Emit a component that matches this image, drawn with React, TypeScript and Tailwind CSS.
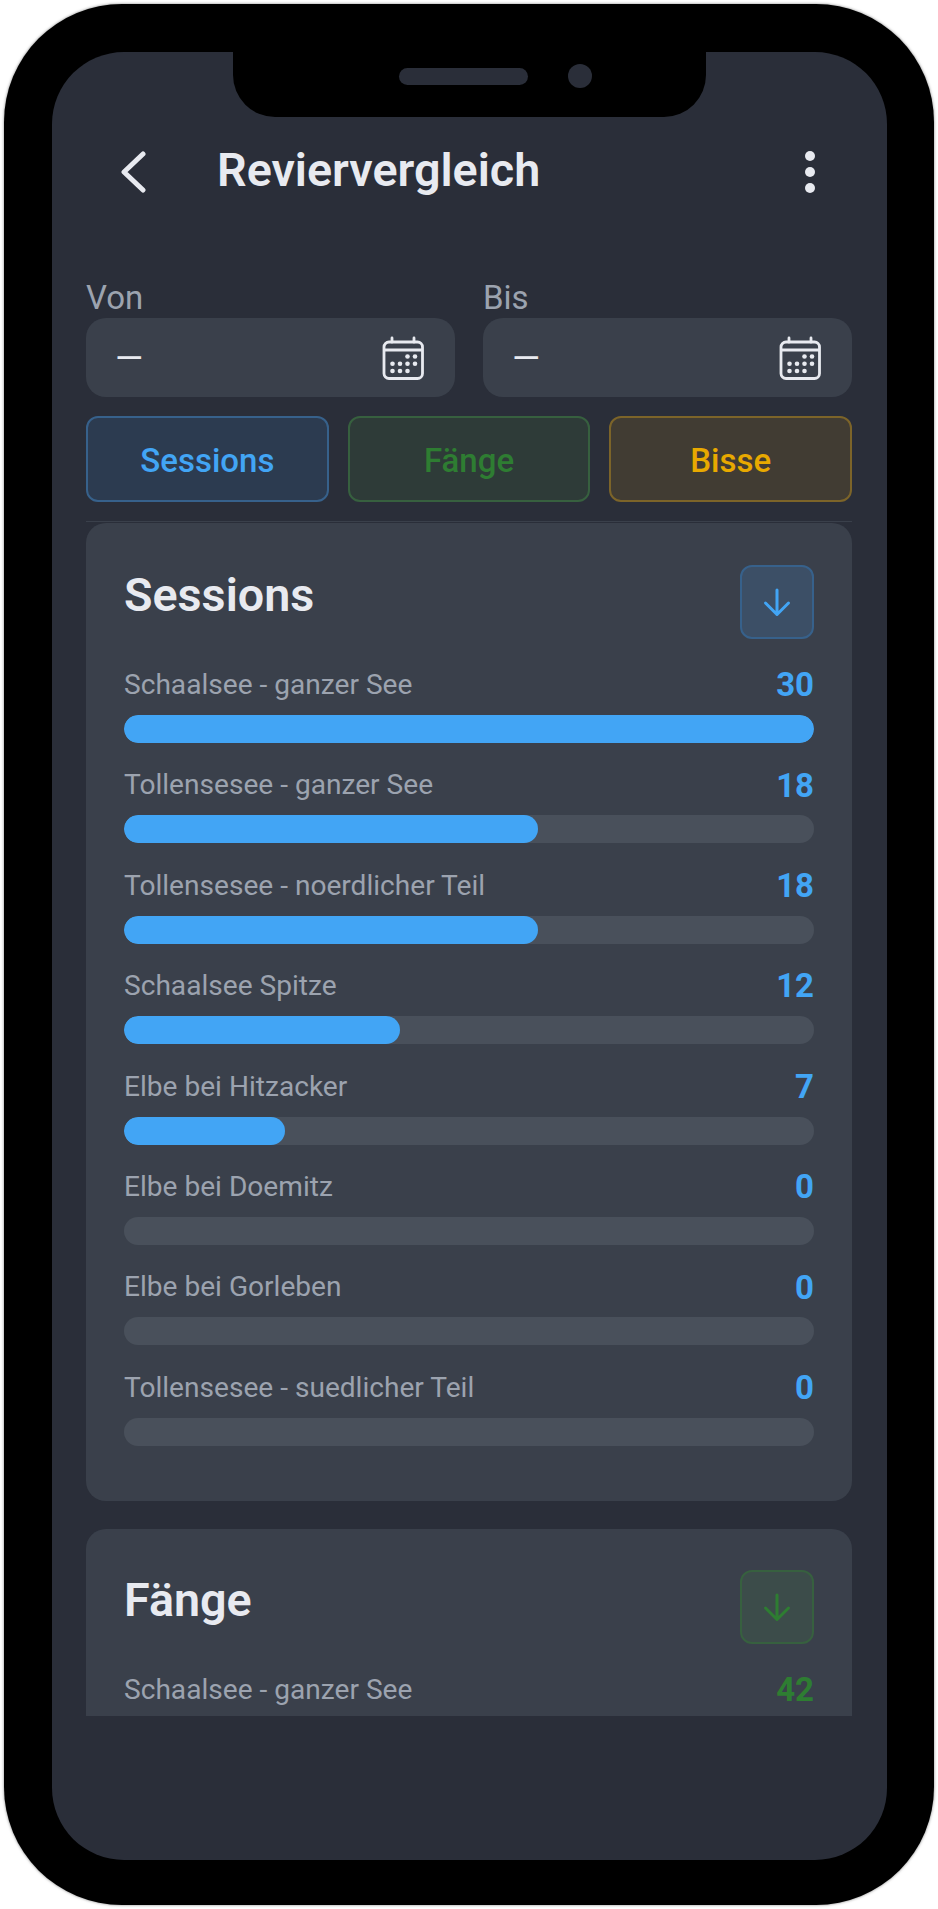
import React from 'react';

const sessions = [
  { name: 'Schaalsee - ganzer See', value: 30 },
  { name: 'Tollensesee - ganzer See', value: 18 },
  { name: 'Tollensesee - noerdlicher Teil', value: 18 },
  { name: 'Schaalsee Spitze', value: 12 },
  { name: 'Elbe bei Hitzacker', value: 7 },
  { name: 'Elbe bei Doemitz', value: 0 },
  { name: 'Elbe bei Gorleben', value: 0 },
  { name: 'Tollensesee - suedlicher Teil', value: 0 },
];

const CalendarIcon = () => (
  <svg width="44" height="44" viewBox="0 -0.500 44 44" fill="none" stroke="#e8eaf0" strokeWidth="2.8">
    <rect x="3" y="5.500" width="38.500" height="36.500" rx="5" />
    <path d="M3 13.500H41.500" />
    <path d="M11 1.500V5.500M33 1.500V5.500" strokeLinecap="round" />
    <g fill="#e8eaf0" stroke="none">
      <circle cx="26.500" cy="20" r="2.300" />
      <circle cx="34" cy="20" r="2.300" />
      <circle cx="11.500" cy="27.300" r="2.300" />
      <circle cx="19" cy="27.300" r="2.300" />
      <circle cx="26.500" cy="27.300" r="2.300" />
      <circle cx="34" cy="27.300" r="2.300" />
      <circle cx="11.500" cy="34.500" r="2.300" />
      <circle cx="19" cy="34.500" r="2.300" />
      <circle cx="26.500" cy="34.500" r="2.300" />
    </g>
  </svg>
);

const ArrowDown = ({ color }: { color: string }) => (
  <svg width="30" height="30" viewBox="0 0 30 30" fill="none" stroke={color} strokeWidth="3" strokeLinecap="round" strokeLinejoin="round">
    <path d="M15 3V27.500M3.500 16L15 27.500L26.500 16" />
  </svg>
);

const DateField = ({ label }: { label: string }) => (
  <div className="flex-1 min-w-0">
    <div className="text-[33px] leading-[37px] mb-[2px] text-[#9ca3af]">{label}</div>
    <div className="h-[79px] rounded-[20px] bg-[#3a404b] flex items-center justify-between pl-[29px] pr-[30px]">
      <span className="text-[36px] pt-[3px] text-[#e8eaf0]">—</span>
      <CalendarIcon />
    </div>
  </div>
);

const StatRow = ({ name, value, max, barClass, valueClass }: { name: string; value: number; max: number; barClass: string; valueClass: string }) => (
  <div className="mb-[24.4px]">
    <div className="h-9 mb-3 flex items-center justify-between">
      <span className="text-[28.1px] text-[#9ca3af]">{name}</span>
      <span className={`text-[33px] font-bold ${valueClass}`}>{value}</span>
    </div>
    <div className="h-7 rounded-full bg-[#49505b] overflow-hidden">
      <div className={`h-full rounded-full ${barClass}`} style={{ width: `${(value / max) * 100}%` }} />
    </div>
  </div>
);

export default function App() {
  return (
    <div className="w-[938px] h-[1909px] bg-white p-1 font-['Roboto',sans-serif]">
      <div className="w-[930px] h-[1901px] bg-black rounded-[118px] shadow-[0_0_3px_rgba(0,0,0,0.5)] pl-12 pr-[47px] pt-12 pb-[45px]">
        <div className="relative h-full rounded-[72px] bg-[#2a2e39] overflow-hidden">
          {/* notch */}
          <div className="absolute left-[181px] top-0 w-[473px] h-[65px] bg-black rounded-b-[42px]">
            <div className="absolute left-[166px] top-4 w-[129px] h-[17px] rounded-full bg-[#2a2e39]" />
            <div className="absolute left-[335px] top-3 w-6 h-6 rounded-full bg-[#2a2e39]" />
          </div>

          <div className="flex flex-col h-full pl-[34px] pr-[35px]">
            <header className="flex items-center h-[60px] mt-[90px] shrink-0">
              <svg width="26" height="42" viewBox="0 0 26 42" fill="none" stroke="#e8eaf0" strokeWidth="5" strokeLinecap="round" strokeLinejoin="round" className="ml-[34px]">
                <path d="M23 3L4 21L23 39" />
              </svg>
              <h1 className="ml-[71px] mb-[4px] text-[46.7px] font-semibold text-[#e8eaf0]">Reviervergleich</h1>
              <div className="ml-auto mr-[37px] flex flex-col gap-[6px]">
                <span className="w-[10px] h-[10px] rounded-full bg-[#e8eaf0]" />
                <span className="w-[10px] h-[10px] rounded-full bg-[#e8eaf0]" />
                <span className="w-[10px] h-[10px] rounded-full bg-[#e8eaf0]" />
              </div>
            </header>

            <div className="flex gap-[28px] mt-[77px] shrink-0">
              <DateField label="Von" />
              <DateField label="Bis" />
            </div>

            <div className="flex gap-[19px] mt-[19px] shrink-0">
              <button className="flex-1 h-[86px] pt-[3px] rounded-[12px] border-2 border-[#37618b] bg-[#2c3b50] text-[33px] font-medium text-[#42a5f5]">Sessions</button>
              <button className="flex-1 h-[86px] pt-[3px] rounded-[12px] border-2 border-[#37603f] bg-[#2e3b38] text-[33px] font-medium text-[#2e7d32]">Fänge</button>
              <button className="flex-1 h-[86px] pt-[3px] rounded-[12px] border-2 border-[#7c6429] bg-[#413c33] text-[33px] font-medium text-[#e8a900]">Bisse</button>
            </div>

            <div className="mt-[19px] h-[1195px] overflow-hidden border-t border-[#3a404b] shrink-0">
              <section className="mt-px mb-[28px] rounded-[20px] bg-[#3a404b] px-[38px] pt-[42px] pb-[31px]">
                <div className="flex items-start justify-between mb-7">
                  <h2 className="text-[46.7px] leading-[60px] font-semibold text-[#e8eaf0]">Sessions</h2>
                  <div className="w-[74px] h-[74px] rounded-[12px] border-2 border-[#37618b] bg-[#3c4f66] flex items-center justify-center">
                    <ArrowDown color="#42a5f5" />
                  </div>
                </div>
                {sessions.map((s) => (
                  <StatRow key={s.name} name={s.name} value={s.value} max={30} barClass="bg-[#42a5f5]" valueClass="text-[#42a5f5]" />
                ))}
              </section>

              <section className="rounded-[20px] bg-[#3a404b] px-[38px] pt-[41px] pb-[34px]">
                <div className="flex items-start justify-between mb-7">
                  <h2 className="text-[46.7px] leading-[60px] font-semibold text-[#e8eaf0]">Fänge</h2>
                  <div className="w-[74px] h-[74px] rounded-[12px] border-2 border-[#37603f] bg-[#3c4c4a] flex items-center justify-center">
                    <ArrowDown color="#2e7d32" />
                  </div>
                </div>
                <StatRow name="Schaalsee - ganzer See" value={42} max={42} barClass="bg-[#2e7d32]" valueClass="text-[#2e7d32]" />
              </section>
            </div>
          </div>
        </div>
      </div>
    </div>
  );
}
